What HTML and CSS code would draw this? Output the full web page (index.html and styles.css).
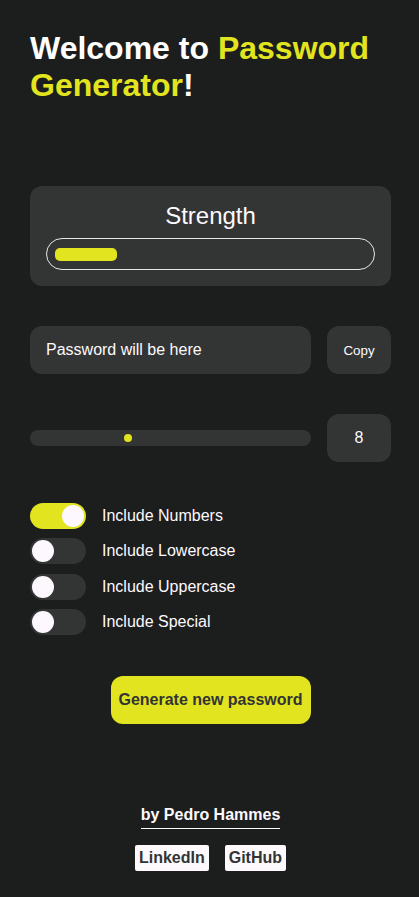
FILE: index.html
```html
<!DOCTYPE html>
<html lang="en">
<head>
<meta charset="utf-8">
<title>Password Generator</title>
<link rel="stylesheet" href="styles.css">
</head>
<body>
<main class="app">
  <h1 class="title">Welcome to <span class="accent">Password Generator</span>!</h1>

  <section class="strength-card">
    <div class="strength-label">Strength</div>
    <div class="strength-bar">
      <div class="strength-fill" style="width: 62px"></div>
    </div>
  </section>

  <section class="row">
    <div class="password-field">Password will be here</div>
    <button class="side-box copy-btn" type="button">Copy</button>
  </section>

  <section class="row row-center">
    <div class="slider">
      <div class="slider-thumb" style="left: 94px"></div>
    </div>
    <div class="side-box length-box">8</div>
  </section>

  <section class="options">
    <div class="option">
      <span class="toggle on"><span class="knob"></span></span>
      <span class="option-label">Include Numbers</span>
    </div>
    <div class="option">
      <span class="toggle"><span class="knob"></span></span>
      <span class="option-label">Include Lowercase</span>
    </div>
    <div class="option">
      <span class="toggle"><span class="knob"></span></span>
      <span class="option-label">Include Uppercase</span>
    </div>
    <div class="option">
      <span class="toggle"><span class="knob"></span></span>
      <span class="option-label">Include Special</span>
    </div>
  </section>

  <div class="generate-wrap">
    <button class="generate-btn" type="button">Generate new password</button>
  </div>

  <footer class="footer">
    <div class="author">by Pedro Hammes</div>
    <div class="links">
      <a class="link" href="#">LinkedIn</a>
      <a class="link" href="#">GitHub</a>
    </div>
  </footer>
</main>
</body>
</html>
```

FILE: styles.css
```css
* { box-sizing: border-box; }

html, body {
  margin: 0;
  padding: 0;
  background: #1c1d1d;
}

body {
  font-family: "Liberation Sans", Arial, sans-serif;
  color: #fdf9fd;
}

.app {
  padding: 30px 28px 30px 30px;
  display: flex;
  flex-direction: column;
  gap: 40px;
}

.title {
  margin: 0 0 42px 0;
  font-size: 32px;
  font-weight: bold;
  line-height: normal;
  color: #ffffff;
}

.accent { color: #e2e41f; }

.strength-card {
  background: #333434;
  border-radius: 12px;
  padding: 16px;
  display: flex;
  flex-direction: column;
  gap: 8px;
  height: 100px;
}

.strength-label {
  text-align: center;
  font-size: 24px;
  line-height: 28px;
  color: #fdf9fd;
}

.strength-bar {
  height: 32px;
  border: 1px solid #e6e6e6;
  border-radius: 16px;
  padding: 8px;
  display: flex;
  align-items: center;
}

.strength-fill {
  height: 13px;
  background: #e2e41f;
  border-radius: 5px;
}

.row {
  display: flex;
  gap: 16px;
}

.row-center { align-items: center; }

.password-field {
  flex: 1;
  height: 48px;
  background: #333434;
  border-radius: 12px;
  padding: 0 16px;
  display: flex;
  align-items: center;
  font-size: 16px;
  color: #fdf9fd;
}

.side-box {
  width: 64px;
  height: 48px;
  flex: none;
  background: #333434;
  border-radius: 12px;
  border: none;
  display: flex;
  align-items: center;
  justify-content: center;
  color: #fdf9fd;
  font-family: "Liberation Sans", Arial, sans-serif;
}

.copy-btn {
  font-size: 13.333px;
  padding: 0;
}

.length-box {
  font-size: 16px;
}

.slider {
  position: relative;
  flex: 1;
  height: 16px;
  background: #333434;
  border-radius: 8px;
}

.slider-thumb {
  position: absolute;
  top: 4px;
  width: 8px;
  height: 8px;
  border-radius: 50%;
  background: #e2e41f;
}

.options {
  display: flex;
  flex-direction: column;
  gap: 7.33px;
}

.option {
  display: flex;
  align-items: center;
  gap: 16px;
  height: 28px;
}

.toggle {
  width: 56px;
  height: 26px;
  border-radius: 13px;
  background: #333434;
  padding: 2px;
  display: flex;
  justify-content: flex-start;
  flex: none;
}

.toggle.on {
  background: #e2e41f;
  justify-content: flex-end;
}

.knob {
  width: 22px;
  height: 22px;
  border-radius: 50%;
  background: #fdf8fd;
}

.option-label {
  font-size: 16px;
  color: #fdf9fd;
}

.generate-wrap {
  display: flex;
  justify-content: center;
}

.generate-btn {
  width: 200px;
  height: 48px;
  border: none;
  border-radius: 12px;
  background: #e2e41f;
  color: #333434;
  font-family: "Liberation Sans", Arial, sans-serif;
  font-size: 16px;
  font-weight: bold;
  padding: 0;
  white-space: nowrap;
}

.footer {
  margin-top: 42px;
  display: flex;
  flex-direction: column;
  align-items: center;
  gap: 16px;
}

.author {
  font-size: 16px;
  font-weight: bold;
  color: #fdf9fd;
  padding-bottom: 4px;
  border-bottom: 1px solid #fdf9fd;
}

.links {
  display: flex;
  gap: 16px;
}

.link {
  background: #fdf9fd;
  color: #333434;
  font-size: 16px;
  font-weight: bold;
  text-decoration: none;
  padding: 4px;
  border-radius: 2px;
  line-height: normal;
}
```
